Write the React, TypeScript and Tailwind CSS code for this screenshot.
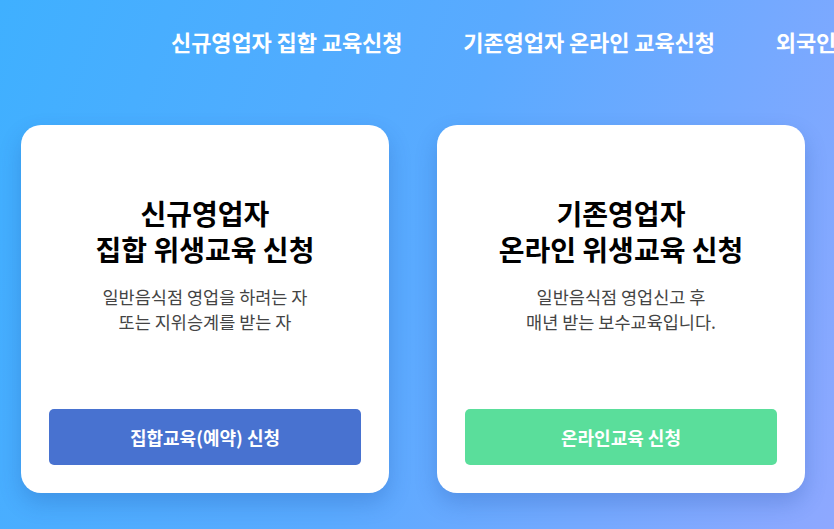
import * as React from 'react';

const FONT = '"Noto Sans CJK KR", "Noto Sans", sans-serif';

const NAV_ITEMS = ['신규영업자 집합 교육신청', '기존영업자 온라인 교육신청', '외국인영업자 교육신청'];

type CardProps = {
    title: string[];
    desc: string[];
    button: string;
    buttonClass: string;
};

const EduCard: React.FC<CardProps> = ({ title, desc, button, buttonClass }) => (
    <div className="w-[368px] h-[368px] shrink-0 bg-white rounded-[20px] shadow-[0_10px_22px_rgba(20,60,140,0.22)] flex flex-col items-center pt-[70px] px-[28px] pb-[28px]">
        <h2 className="text-[28px] leading-[36px] font-bold text-black text-center">
            {title.map((t, i) => (
                <div key={i}>{t}</div>
            ))}
        </h2>
        <p className="mt-[17px] text-[17.5px] leading-[25px] text-[#444] text-center">
            {desc.map((d, i) => (
                <span key={i} className="block">{d}</span>
            ))}
        </p>
        <button className={`mt-auto w-full h-[56px] rounded-[5px] text-white text-[18px] font-bold ${buttonClass}`}>
            {button}
        </button>
    </div>
);

const App: React.FC = () => {
    return (
        <div
            className="w-[834px] h-[529px] overflow-hidden bg-[linear-gradient(110deg,#3fb0ff_0%,#5aaaff_50%,#8ea8ff_100%)]"
            style={{ fontFamily: FONT }}
        >
            <nav className="flex gap-[61px] pl-[171px] pt-[26px] whitespace-nowrap">
                {NAV_ITEMS.map(item => (
                    <span key={item} className="text-white text-[22px] leading-[30px] font-bold tracking-[-0.1px]">
                        {item}
                    </span>
                ))}
            </nav>
            <div className="flex gap-[48px] pl-[21px] mt-[69px]">
                <EduCard
                    title={['신규영업자', '집합 위생교육 신청']}
                    desc={['일반음식점 영업을 하려는 자', '또는 지위승계를 받는 자']}
                    button="집합교육(예약) 신청"
                    buttonClass="bg-[#4872d0]"
                />
                <EduCard
                    title={['기존영업자', '온라인 위생교육 신청']}
                    desc={['일반음식점 영업신고 후', '매년 받는 보수교육입니다.']}
                    button="온라인교육 신청"
                    buttonClass="bg-[#5ade9b]"
                />
            </div>
        </div>
    );
};

export default App;
